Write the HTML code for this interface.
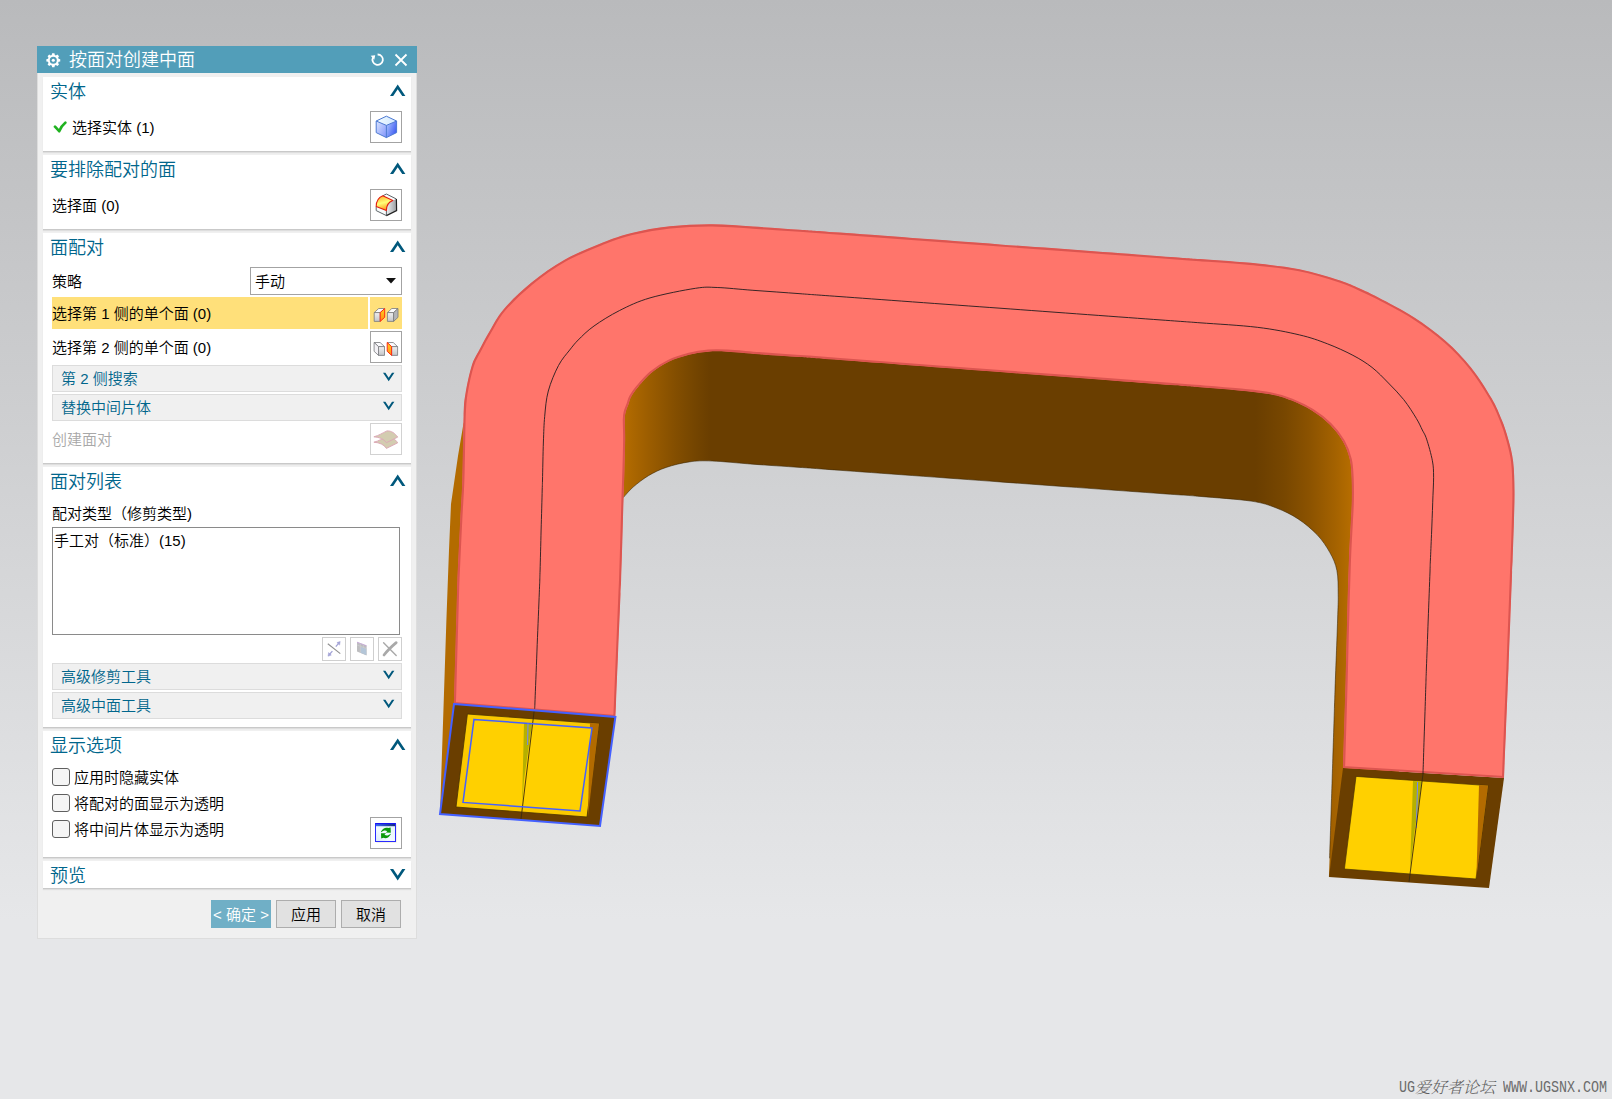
<!DOCTYPE html>
<html lang="zh-CN">
<head>
<meta charset="utf-8">
<title>按面对创建中面</title>
<style>
*{box-sizing:border-box;margin:0;padding:0}
html,body{width:1612px;height:1099px;overflow:hidden}
body{position:relative;font-family:"Liberation Sans","Noto Sans CJK SC",sans-serif;font-size:15px;font-weight:350;color:#000;
background:linear-gradient(to bottom,#b9babc 0px,#e6e7e9 920px,#e6e7e9 1099px);}
#model{position:absolute;left:0;top:0;width:1612px;height:1099px}
.panel{position:absolute;left:37px;top:46px;width:380px;height:893px;background:#f0f0f0;box-shadow:inset 0 0 0 1px #dddddd}
.abs{position:absolute}
.title{position:absolute;left:0;top:0;width:380px;height:27px;background:#529eb9;color:#fff;font-size:18px;line-height:27px}
.title span{position:absolute;left:32px;top:1px}
.sec{position:absolute;left:6px;width:368px;background:#fff;box-shadow:0 1px 0 #c9c9c9,0 2px 1px #dedede}
.sec h3{position:absolute;left:7px;top:1px;height:29px;line-height:29px;font-size:18px;font-weight:350;color:#00668c;white-space:nowrap}
.chev{position:absolute;left:347px;top:7px;width:16px;height:13px}
.lbl{position:absolute;left:9px;height:20px;line-height:20px;margin-top:1px;font-size:15px;white-space:nowrap}
.btn{position:absolute;left:327px;width:32px;height:32px;border:1px solid #a3a3a3;background:#fff}
.btn svg{position:absolute;left:-1px;top:-1px;width:32px;height:32px}
.grp{position:absolute;left:9px;width:350px;height:27px;background:#f0f0f0;border:1px solid #dcdcdc;color:#00668c;font-size:15px;line-height:25px;padding-left:8px;white-space:nowrap}
.grp svg{position:absolute;left:330px;top:6px;width:12px;height:10px}
.cb{position:absolute;left:9px;width:18px;height:18px;border:1px solid #5f5f5f;border-radius:3px;background:#f5f5f5}
.sbtn{position:absolute;width:24px;height:24px;border:1px solid #cfcfcf;background:#fff}
.sbtn svg{position:absolute;left:-1px;top:-1px;width:24px;height:24px}
.pb{position:absolute;top:854px;width:60px;height:28px;border:1px solid #adadad;background:#e1e1e1;text-align:center;line-height:28px;font-size:15px}
.wm{position:absolute;top:1077px;height:22px;line-height:22px;font-size:16px;color:#6b6b6b;white-space:nowrap;font-family:"Liberation Mono","Noto Serif CJK SC",monospace}
.wc{font-family:"Liberation Serif","Noto Serif CJK SC",serif;font-style:italic;font-weight:300;color:#5e5e5e}
.wl{display:inline-block;transform:scaleX(.833);transform-origin:0 50%}
</style>
</head>
<body>
<!--MODEL_START--><svg id="model" viewBox="0 0 1612 1099">
<defs>
<linearGradient id="gf" gradientUnits="userSpaceOnUse" x1="620" y1="0" x2="1352" y2="0">
<stop offset="0.005" stop-color="#b46c00"/><stop offset="0.042" stop-color="#9a5c00"/><stop offset="0.0765" stop-color="#834e00"/><stop offset="0.1025" stop-color="#744500"/><stop offset="0.123" stop-color="#6a3e00"/>
<stop offset="0.868" stop-color="#6a3e00"/><stop offset="0.908" stop-color="#784700"/><stop offset="0.943" stop-color="#8c5300"/><stop offset="0.977" stop-color="#a46200"/><stop offset="0.997" stop-color="#b46c00"/>
</linearGradient>
</defs>
<!-- left outer side strip -->
<path d="M468 412 L463.4 424 L458 456 L451 504 L449 550 L446.4 620 L440 814 L458 704 L472 700 L472 412 Z" fill="#b36b00"/>
<!-- inner face -->
<path d="M623.4 497.5 C625.0 495.8 628.9 490.7 633.1 487.1 C637.3 483.5 642.9 479.0 648.4 475.7 C653.9 472.4 659.4 469.7 666.2 467.4 C673.0 465.1 681.6 463.0 689.2 461.9 C696.9 460.8 701.5 460.6 712.1 461.0 C722.7 461.4 738.2 463.1 752.9 464.2 C767.5 465.3 785.5 466.4 800.0 467.4 C814.5 468.4 806.7 467.9 840.0 470.3 C873.3 472.7 946.7 478.0 1000.0 481.9 C1053.3 485.8 1126.7 491.1 1160.0 493.5 C1193.3 495.9 1184.8 495.1 1200.0 496.4 C1215.2 497.7 1238.3 499.2 1251.0 501.1 C1263.7 503.0 1268.6 505.0 1276.4 508.0 C1284.2 511.0 1291.3 514.4 1298.1 518.9 C1304.9 523.4 1311.9 529.2 1317.2 534.8 C1322.5 540.4 1326.6 546.7 1329.9 552.6 C1333.2 558.5 1335.5 563.4 1336.9 570.4 C1338.3 577.4 1338.1 586.3 1338.2 594.6 C1338.3 602.9 1338.1 604.1 1337.6 620.0 C1337.1 635.9 1335.5 675.2 1335.0 690.0 C1334.5 704.8 1334.9 693.1 1334.4 708.7 C1333.9 724.3 1332.8 758.6 1332.0 783.5 C1331.2 808.4 1330.1 842.7 1329.6 858.3 C1329.1 873.9 1329.1 873.9 1329.0 877.0 L1400 770 L1400 350 L700 300 L580 400 L580 498 Z" fill="url(#gf)"/>
<path d="M623.4 497.5 C625.0 495.8 628.9 490.7 633.1 487.1 C637.3 483.5 642.9 479.0 648.4 475.7 C653.9 472.4 659.4 469.7 666.2 467.4 C673.0 465.1 681.6 463.0 689.2 461.9 C696.9 460.8 701.5 460.6 712.1 461.0 C722.7 461.4 738.2 463.1 752.9 464.2 C767.5 465.3 785.5 466.4 800.0 467.4 C814.5 468.4 806.7 467.9 840.0 470.3 C873.3 472.7 946.7 478.0 1000.0 481.9 C1053.3 485.8 1126.7 491.1 1160.0 493.5 C1193.3 495.9 1184.8 495.1 1200.0 496.4 C1215.2 497.7 1238.3 499.2 1251.0 501.1 C1263.7 503.0 1268.6 505.0 1276.4 508.0 C1284.2 511.0 1291.3 514.4 1298.1 518.9 C1304.9 523.4 1311.9 529.2 1317.2 534.8 C1322.5 540.4 1326.6 546.7 1329.9 552.6 C1333.2 558.5 1335.5 563.4 1336.9 570.4 C1338.3 577.4 1338.1 586.3 1338.2 594.6 C1338.3 602.9 1338.1 604.1 1337.6 620.0 C1337.1 635.9 1335.5 675.2 1335.0 690.0 C1334.5 704.8 1334.9 693.1 1334.4 708.7 C1333.9 724.3 1332.8 758.6 1332.0 783.5 C1331.2 808.4 1330.0 845.8 1329.6 858.3" fill="none" stroke="#3a2400" stroke-width="0.8" opacity=".7"/>
<!-- left end face -->
<g>
<path d="M454 704 L615.4 717 L600 826 L440 814 Z" fill="#6a3e00"/>
<path d="M467.4 714 L599 723.6 L587 817 L456 807 Z" fill="#fbc900" stroke="#4a3200" stroke-width="0.8"/>
<path d="M590 723 L599 723.6 L588 816 Z" fill="#b36b00"/>
<path d="M474 719.4 L592 728 L580 811 L463 802.4 Z" fill="#ffd000"/>
<path d="M524 723 L532 723.6 L524 780 L522 806 Z" fill="#b5b000"/>
<path d="M534.4 709 L521 819" stroke="#3a2a10" stroke-width="0.9" fill="none"/>
<path d="M474 719.4 L592 728 L580 811 L463 802.4 Z" fill="none" stroke="#4460ff" stroke-width="1.5"/>
<path d="M528 723.4 L527.6 745" stroke="#6f86ff" stroke-width="1"/>
</g>
<!-- right end face -->
<g>
<path d="M1343 768 L1504 778 L1489 888 L1329 877 Z" fill="#6a3e00"/>
<path d="M1356 776.4 L1488 785.6 L1476 879 L1344.4 869 Z" fill="#ffd000" stroke="#4a3200" stroke-width="0.7"/>
<path d="M1479 785 L1488 785.6 L1476.4 878 Z" fill="#b36b00"/>
<path d="M1413 781 L1422 781.6 L1414 835 L1410 870 Z" fill="#b5b000"/>
<path d="M1417.6 782 L1416.4 828" stroke="#6f86ff" stroke-width="1"/>
<path d="M1423 774 L1409 882" stroke="#3a2a10" stroke-width="0.9" fill="none"/>
</g>
<!-- top salmon face -->
<clipPath id="cs"><path d="M453.8 704.0 C453.9 701.9 453.9 701.9 454.2 691.6 C454.5 681.3 455.1 658.5 455.6 642.0 C456.1 625.5 456.7 602.7 457.0 592.4 C457.3 582.1 456.9 592.1 457.4 580.0 C457.9 567.9 459.4 536.7 460.2 520.0 C461.0 503.3 461.7 497.3 462.3 480.0 C462.9 462.7 463.1 430.8 463.6 416.4 C464.1 402.0 464.1 402.0 465.5 393.5 C466.9 385.0 469.5 372.8 471.8 365.5 C474.1 358.2 476.3 355.8 479.3 350.0 C482.3 344.2 486.0 337.3 490.0 330.5 C494.0 323.7 496.6 317.4 503.5 309.4 C510.4 301.4 521.3 290.9 531.5 282.6 C541.7 274.3 552.7 266.4 564.6 259.7 C576.5 253.0 591.7 247.0 602.9 242.5 C614.1 238.0 620.6 235.6 631.8 232.9 C643.0 230.2 656.6 227.7 670.0 226.3 C683.4 224.9 698.3 224.2 712.1 224.3 C725.9 224.4 738.2 225.7 752.9 226.6 C767.5 227.5 785.5 228.7 800.0 229.7 C814.5 230.7 806.7 230.2 840.0 232.6 C873.3 235.1 946.7 240.5 1000.0 244.4 C1053.3 248.3 1126.7 253.7 1160.0 256.2 C1193.3 258.6 1183.8 257.9 1200.0 259.1 C1216.2 260.3 1240.7 261.9 1257.3 263.6 C1273.9 265.3 1285.6 266.5 1299.4 269.3 C1313.2 272.1 1330.1 277.3 1340.1 280.5 C1350.0 283.7 1352.7 285.5 1359.1 288.3 C1365.5 291.1 1369.2 292.7 1378.3 297.5 C1387.4 302.3 1402.7 309.9 1413.9 317.2 C1425.1 324.4 1436.2 332.6 1445.7 341.0 C1455.2 349.4 1463.6 358.1 1471.2 367.7 C1478.8 377.2 1486.5 389.6 1491.6 398.3 C1496.7 407.0 1499.0 413.2 1501.8 420.0 C1504.6 426.8 1506.3 432.1 1508.2 439.1 C1510.1 446.1 1512.2 453.3 1513.2 462.0 C1514.2 470.7 1514.4 481.3 1514.5 491.3 C1514.6 501.3 1514.2 510.4 1513.9 521.9 C1513.6 533.4 1512.9 551.6 1512.6 560.0 C1512.3 568.4 1512.5 562.0 1512.1 572.0 C1511.8 582.0 1510.9 604.0 1510.3 620.0 C1509.7 636.0 1508.8 658.0 1508.5 668.0 C1508.1 678.0 1508.1 676.4 1508.0 680.0 C1507.9 683.6 1507.9 681.6 1507.6 689.8 C1507.3 698.0 1506.5 715.9 1506.0 729.0 C1505.5 742.1 1504.7 760.0 1504.4 768.2 C1504.1 776.4 1504.1 776.4 1504.0 778.0 L1343.0 768.0 C1343.4 753.3 1344.9 704.7 1345.6 680.0 C1346.3 655.3 1346.5 640.0 1347.1 620.0 C1347.6 600.0 1348.3 576.3 1348.9 560.0 C1349.5 543.7 1350.3 532.0 1350.8 522.0 C1351.3 512.0 1351.7 507.3 1351.8 500.0 C1351.9 492.7 1351.9 485.1 1351.6 478.3 C1351.2 471.5 1351.2 465.4 1349.7 459.2 C1348.2 453.0 1346.0 447.0 1342.7 441.3 C1339.4 435.6 1335.0 429.9 1329.9 424.8 C1324.8 419.7 1318.5 414.8 1312.1 410.8 C1305.7 406.8 1298.7 403.4 1291.7 400.6 C1284.7 397.8 1279.0 395.9 1270.1 394.2 C1261.2 392.5 1249.9 391.6 1238.2 390.4 C1226.5 389.2 1213.0 388.2 1200.0 387.2 C1187.0 386.2 1193.3 386.7 1160.0 384.2 C1126.7 381.7 1053.3 376.1 1000.0 372.1 C946.7 368.1 873.3 362.5 840.0 360.0 C806.7 357.5 813.5 358.0 800.0 357.0 C786.5 356.0 771.3 355.1 759.2 354.2 C747.1 353.3 735.9 352.1 727.4 351.7 C718.9 351.3 714.7 351.2 708.3 351.7 C701.9 352.2 695.8 353.1 689.2 354.8 C682.6 356.5 675.2 358.7 668.8 361.8 C662.4 364.9 656.3 368.8 651.0 373.3 C645.7 377.8 640.2 384.6 636.9 388.6 C633.6 392.6 632.4 394.8 631.0 397.3 C629.6 399.9 629.5 401.6 628.7 403.9 C627.9 406.2 626.6 408.8 626.0 411.3 C625.4 413.9 625.0 414.4 624.9 419.2 C624.8 424.0 625.3 431.5 625.2 440.0 C625.1 448.5 624.8 460.4 624.5 470.0 C624.2 479.6 624.0 485.3 623.6 497.3 C623.2 509.3 622.7 528.2 622.3 542.0 C621.9 555.8 621.4 571.4 621.1 580.0 C620.8 588.6 621.0 582.3 620.5 593.7 C620.1 605.1 619.0 630.2 618.2 648.5 C617.5 666.8 616.4 691.9 616.0 703.3 C615.5 714.7 615.5 714.7 615.4 717.0 Z"/></clipPath>
<path d="M453.8 704.0 C453.9 701.9 453.9 701.9 454.2 691.6 C454.5 681.3 455.1 658.5 455.6 642.0 C456.1 625.5 456.7 602.7 457.0 592.4 C457.3 582.1 456.9 592.1 457.4 580.0 C457.9 567.9 459.4 536.7 460.2 520.0 C461.0 503.3 461.7 497.3 462.3 480.0 C462.9 462.7 463.1 430.8 463.6 416.4 C464.1 402.0 464.1 402.0 465.5 393.5 C466.9 385.0 469.5 372.8 471.8 365.5 C474.1 358.2 476.3 355.8 479.3 350.0 C482.3 344.2 486.0 337.3 490.0 330.5 C494.0 323.7 496.6 317.4 503.5 309.4 C510.4 301.4 521.3 290.9 531.5 282.6 C541.7 274.3 552.7 266.4 564.6 259.7 C576.5 253.0 591.7 247.0 602.9 242.5 C614.1 238.0 620.6 235.6 631.8 232.9 C643.0 230.2 656.6 227.7 670.0 226.3 C683.4 224.9 698.3 224.2 712.1 224.3 C725.9 224.4 738.2 225.7 752.9 226.6 C767.5 227.5 785.5 228.7 800.0 229.7 C814.5 230.7 806.7 230.2 840.0 232.6 C873.3 235.1 946.7 240.5 1000.0 244.4 C1053.3 248.3 1126.7 253.7 1160.0 256.2 C1193.3 258.6 1183.8 257.9 1200.0 259.1 C1216.2 260.3 1240.7 261.9 1257.3 263.6 C1273.9 265.3 1285.6 266.5 1299.4 269.3 C1313.2 272.1 1330.1 277.3 1340.1 280.5 C1350.0 283.7 1352.7 285.5 1359.1 288.3 C1365.5 291.1 1369.2 292.7 1378.3 297.5 C1387.4 302.3 1402.7 309.9 1413.9 317.2 C1425.1 324.4 1436.2 332.6 1445.7 341.0 C1455.2 349.4 1463.6 358.1 1471.2 367.7 C1478.8 377.2 1486.5 389.6 1491.6 398.3 C1496.7 407.0 1499.0 413.2 1501.8 420.0 C1504.6 426.8 1506.3 432.1 1508.2 439.1 C1510.1 446.1 1512.2 453.3 1513.2 462.0 C1514.2 470.7 1514.4 481.3 1514.5 491.3 C1514.6 501.3 1514.2 510.4 1513.9 521.9 C1513.6 533.4 1512.9 551.6 1512.6 560.0 C1512.3 568.4 1512.5 562.0 1512.1 572.0 C1511.8 582.0 1510.9 604.0 1510.3 620.0 C1509.7 636.0 1508.8 658.0 1508.5 668.0 C1508.1 678.0 1508.1 676.4 1508.0 680.0 C1507.9 683.6 1507.9 681.6 1507.6 689.8 C1507.3 698.0 1506.5 715.9 1506.0 729.0 C1505.5 742.1 1504.7 760.0 1504.4 768.2 C1504.1 776.4 1504.1 776.4 1504.0 778.0 L1343.0 768.0 C1343.4 753.3 1344.9 704.7 1345.6 680.0 C1346.3 655.3 1346.5 640.0 1347.1 620.0 C1347.6 600.0 1348.3 576.3 1348.9 560.0 C1349.5 543.7 1350.3 532.0 1350.8 522.0 C1351.3 512.0 1351.7 507.3 1351.8 500.0 C1351.9 492.7 1351.9 485.1 1351.6 478.3 C1351.2 471.5 1351.2 465.4 1349.7 459.2 C1348.2 453.0 1346.0 447.0 1342.7 441.3 C1339.4 435.6 1335.0 429.9 1329.9 424.8 C1324.8 419.7 1318.5 414.8 1312.1 410.8 C1305.7 406.8 1298.7 403.4 1291.7 400.6 C1284.7 397.8 1279.0 395.9 1270.1 394.2 C1261.2 392.5 1249.9 391.6 1238.2 390.4 C1226.5 389.2 1213.0 388.2 1200.0 387.2 C1187.0 386.2 1193.3 386.7 1160.0 384.2 C1126.7 381.7 1053.3 376.1 1000.0 372.1 C946.7 368.1 873.3 362.5 840.0 360.0 C806.7 357.5 813.5 358.0 800.0 357.0 C786.5 356.0 771.3 355.1 759.2 354.2 C747.1 353.3 735.9 352.1 727.4 351.7 C718.9 351.3 714.7 351.2 708.3 351.7 C701.9 352.2 695.8 353.1 689.2 354.8 C682.6 356.5 675.2 358.7 668.8 361.8 C662.4 364.9 656.3 368.8 651.0 373.3 C645.7 377.8 640.2 384.6 636.9 388.6 C633.6 392.6 632.4 394.8 631.0 397.3 C629.6 399.9 629.5 401.6 628.7 403.9 C627.9 406.2 626.6 408.8 626.0 411.3 C625.4 413.9 625.0 414.4 624.9 419.2 C624.8 424.0 625.3 431.5 625.2 440.0 C625.1 448.5 624.8 460.4 624.5 470.0 C624.2 479.6 624.0 485.3 623.6 497.3 C623.2 509.3 622.7 528.2 622.3 542.0 C621.9 555.8 621.4 571.4 621.1 580.0 C620.8 588.6 621.0 582.3 620.5 593.7 C620.1 605.1 619.0 630.2 618.2 648.5 C617.5 666.8 616.4 691.9 616.0 703.3 C615.5 714.7 615.5 714.7 615.4 717.0 Z" fill="#ff756b" stroke="#dc5550" stroke-width="4.2" stroke-linejoin="round" clip-path="url(#cs)"/>
<path d="M534.7 708.7 C534.8 706.6 534.8 706.6 535.2 695.8 C535.6 685.1 536.6 661.5 537.2 644.4 C537.9 627.2 538.9 603.6 539.3 592.9 C539.7 582.1 539.7 583.8 539.8 580.0 C539.9 576.2 539.8 578.3 540.1 570.0 C540.3 561.7 540.8 543.3 541.1 530.0 C541.5 516.7 542.0 498.3 542.2 490.0 C542.5 481.7 542.3 488.0 542.5 480.0 C542.7 472.0 543.0 452.6 543.4 442.0 C543.8 431.4 543.9 424.9 544.7 416.4 C545.5 407.9 546.0 399.5 548.3 391.0 C550.6 382.5 554.9 372.3 558.5 365.5 C562.1 358.7 566.4 354.2 569.7 350.0 C573.0 345.8 574.2 344.0 578.2 340.0 C582.2 336.0 587.1 330.9 594.0 326.0 C600.9 321.1 610.1 315.3 619.4 310.6 C628.7 305.9 637.3 301.6 650.0 297.9 C662.7 294.2 684.3 290.0 695.5 288.3 C706.7 286.6 707.6 287.2 717.2 287.5 C726.8 287.8 739.1 289.3 752.9 290.3 C766.7 291.3 785.5 292.6 800.0 293.7 C814.5 294.8 806.7 294.2 840.0 296.6 C873.3 299.0 946.7 304.4 1000.0 308.2 C1053.3 312.1 1126.7 317.5 1160.0 319.9 C1193.3 322.3 1183.8 321.6 1200.0 322.8 C1216.2 324.0 1240.7 325.3 1257.3 327.3 C1273.9 329.3 1287.7 332.1 1299.4 334.9 C1311.1 337.6 1318.5 340.4 1327.4 343.8 C1336.3 347.2 1345.5 351.4 1352.9 355.3 C1360.3 359.2 1366.1 362.8 1372.0 367.4 C1377.9 372.0 1383.1 377.6 1388.4 383.0 C1393.7 388.4 1399.0 393.7 1403.7 399.6 C1408.4 405.5 1413.3 413.4 1416.4 418.5 C1419.5 423.6 1420.6 426.6 1422.3 430.0 C1424.0 433.4 1424.9 434.0 1426.6 439.1 C1428.3 444.2 1431.2 454.4 1432.4 460.8 C1433.6 467.2 1433.5 470.3 1433.6 477.3 C1433.6 484.3 1433.0 493.2 1432.7 502.8 C1432.4 512.4 1431.9 525.1 1431.5 534.6 C1431.1 544.1 1430.7 553.8 1430.4 560.0 C1430.1 566.2 1430.3 562.0 1430.0 572.0 C1429.6 582.0 1428.8 604.0 1428.2 620.0 C1427.6 636.0 1426.8 658.0 1426.4 668.0 C1426.1 678.0 1426.1 676.4 1426.0 680.0 C1425.9 683.6 1426.0 681.6 1425.7 689.4 C1425.5 697.2 1424.9 714.5 1424.5 727.0 C1424.1 739.5 1423.5 756.8 1423.3 764.6 C1423.0 772.4 1423.0 772.4 1423.0 774.0" fill="none" stroke="#231c1e" stroke-width="0.9"/>
<!-- left end blue outline -->
<path d="M454 704 L615.4 717 L600 826 L440 814 Z" fill="none" stroke="#4460ff" stroke-width="2"/>
</svg><!--MODEL_END-->
<div class="panel">
  <div class="title">
    <svg class="abs" style="left:7.700px;top:5.600px" width="16.600" height="16.600" viewBox="0 0 16 16"><g fill="#fff"><path d="M8 1.2l1.1.1.4 1.6 1 .45 1.45-.85 1.55 1.55-.85 1.45.45 1 1.6.4v2.2l-1.6.4-.45 1 .85 1.45-1.55 1.55-1.45-.85-1 .45-.4 1.6H6.900l-.4-1.6-1-.45-1.450.85-1.550-1.550.85-1.450-.45-1-1.600-.4V6.900l1.600-.4.45-1-.85-1.450L4.050 2.500l1.450.85 1-.45.4-1.600z M8 4.600a3.400 3.400 0 100 6.800 3.400 3.400 0 000-6.800z" fill-rule="evenodd"/><circle cx="8" cy="8" r="1.500"/></g></svg>
    <span>按面对创建中面</span>
    <svg class="abs" style="left:332px;top:6px" width="16" height="16" viewBox="0 0 16 16"><path d="M4 5.400A5.200 5.200 0 1 0 8.600 2.500" fill="none" stroke="#fff" stroke-width="1.800"/><path d="M1.700 3.700L6.200 3.200 5.300 7.700z" fill="#fff"/></svg>
    <svg class="abs" style="left:357px;top:7px" width="14" height="14" viewBox="0 0 14 14"><path d="M1.500 1.500l11 11M12.500 1.500l-11 11" stroke="#fff" stroke-width="1.800" fill="none"/></svg>
  </div>

  <!-- 实体 -->
  <div class="sec" style="top:31px;height:74px">
    <h3>实体</h3>
    <svg class="chev" viewBox="0 0 16 13"><path d="M7.700 .6L15.400 12H12.200L7.700 5.300 3.200 12H0z" fill="#00587c"/></svg>
    <svg class="abs" style="left:10px;top:43px" width="14" height="14" viewBox="0 0 14 14"><path d="M2 6.700L6.200 11.200C7.600 7.800 9.600 4.800 12.300 2.700" fill="none" stroke="#20b220" stroke-width="2.700" stroke-linejoin="round" stroke-linecap="round"/></svg>
    <div class="lbl" style="left:29px;top:40px">选择实体 (1)</div>
    <div class="btn" style="top:34px"><!--ICON1S--><svg viewBox="0 0 32 32"><defs><linearGradient id="c1l" x1="0" y1="0" x2="1" y2="1"><stop offset="0" stop-color="#dbe6ff"/><stop offset="1" stop-color="#7f93fb"/></linearGradient><linearGradient id="c1r" x1="0" y1="0" x2="1" y2="0.6"><stop offset="0" stop-color="#b4ccff"/><stop offset="1" stop-color="#3f5cf2"/></linearGradient><linearGradient id="c1t" x1="0" y1="0" x2="1" y2="0"><stop offset="0" stop-color="#f2fcff"/><stop offset="1" stop-color="#d2e8ff"/></linearGradient></defs>
<path d="M16.4 5.200L26.6 10 16.4 14.4 6.2 10z" fill="url(#c1t)"/><path d="M6.2 10L16.4 14.400V26.600L6.2 21.600z" fill="url(#c1l)"/><path d="M26.6 10L16.4 14.400V26.600L26.6 21.600z" fill="url(#c1r)"/>
<path d="M16.4 5.200L26.6 10V21.600L16.4 26.6 6.2 21.600V10zM6.2 10L16.4 14.4 26.6 10M16.4 14.400V26.6" fill="none" stroke="#4b78d2" stroke-width="1" stroke-linejoin="round"/></svg><!--ICON1E--></div>
  </div>

  <!-- 要排除配对的面 -->
  <div class="sec" style="top:109px;height:74px">
    <h3>要排除配对的面</h3>
    <svg class="chev" viewBox="0 0 16 13"><path d="M7.700 .6L15.400 12H12.200L7.700 5.300 3.200 12H0z" fill="#00587c"/></svg>
    <div class="lbl" style="top:40px">选择面 (0)</div>
    <div class="btn" style="top:34px"><!--ICON2S--><svg viewBox="0 0 32 32"><defs><linearGradient id="c2o" x1="0" y1="0" x2="0.3" y2="1"><stop offset="0" stop-color="#ffa51e"/><stop offset="0.55" stop-color="#ffff78"/><stop offset="1" stop-color="#ff9a1a"/></linearGradient><linearGradient id="c2g" x1="0" y1="0" x2="1" y2="0"><stop offset="0" stop-color="#eef1f3"/><stop offset="1" stop-color="#9a9da0"/></linearGradient></defs>
<path d="M12.8 6.800L16.4 5 26.4 10 22.8 11.600z" fill="#fbfdfd"/>
<path d="M22.8 11.600L26.4 10 26.6 21.6 16.4 26.600V21.600C16.4 16.5 18.8 13 22.8 11.600z" fill="url(#c2g)"/>
<path d="M6.2 17.600L16.4 21.600V26.600L6.2 21.600z" fill="#f7fbfb"/>
<path d="M6.2 17.600C6.2 12 8.5 8.5 12.8 6.800L22.8 11.600C18.8 13 16.4 16.5 16.4 21.600z" fill="url(#c2o)"/>
<path d="M12.8 6.800L16.4 5 26.4 10M6.2 17.600V21.600L16.4 26.600V21.6" fill="none" stroke="#5d6468" stroke-width="1"/>
<path d="M26.4 10L26.6 21.6 16.4 26.6" fill="none" stroke="#222" stroke-width="1.2"/>
<path d="M6.2 17.600C6.2 12 8.5 8.5 12.8 6.800L22.8 11.600C18.8 13 16.4 16.5 16.4 21.600z" fill="none" stroke="#e21d12" stroke-width="1.1" stroke-linejoin="round"/></svg><!--ICON2E--></div>
  </div>

  <!-- 面配对 -->
  <div class="sec" style="top:187px;height:230px">
    <h3>面配对</h3>
    <svg class="chev" viewBox="0 0 16 13"><path d="M7.700 .6L15.400 12H12.200L7.700 5.300 3.200 12H0z" fill="#00587c"/></svg>
    <div class="lbl" style="top:38px">策略</div>
    <div class="abs" style="left:207px;top:34px;width:152px;height:28px;border:1px solid #a3a3a3;background:#fff;line-height:28px;padding-left:4px">手动
      <svg class="abs" style="left:135px;top:10px" width="10" height="6" viewBox="0 0 10 6"><path d="M0 0h10L5 5.500z" fill="#111"/></svg>
    </div>
    <div class="abs" style="left:9px;top:64px;width:316px;height:32px;background:#ffe07a;line-height:34px;white-space:nowrap">选择第 1 侧的单个面 (0)</div>
    <div class="abs" style="left:327px;top:64px;width:32px;height:32px;background:#ffe07a"><!--ICON3S--><svg class="abs" style="left:0;top:0" width="32" height="32" viewBox="0 0 32 32"><defs><linearGradient id="cg" x1="0" y1="0" x2="0" y2="1"><stop offset="0" stop-color="#f0f0f2"/><stop offset="1" stop-color="#c4c5c8"/></linearGradient><linearGradient id="co" x1="0" y1="0" x2="0" y2="1"><stop offset="0" stop-color="#ffd21e"/><stop offset="1" stop-color="#ff8a14"/></linearGradient></defs><path d="M4.2 15.6L8.7 11.5H14.7L10.2 15.6z" fill="#fafafc" stroke="#77797c" stroke-width=".8" stroke-linejoin="round"/><path d="M4.2 15.6H10.2V24.4H4.2z" fill="url(#cg)" stroke="#77797c" stroke-width=".8" stroke-linejoin="round"/><path d="M10.2 15.6L14.7 11.5V20.299999999999997L10.2 24.4z" fill="url(#co)" stroke="#ff2a14" stroke-width="1" stroke-linejoin="round"/><path d="M17.4 15.6L21.799999999999997 11.5H28.0L23.6 15.6z" fill="#fafafc" stroke="#77797c" stroke-width=".8" stroke-linejoin="round"/><path d="M17.4 15.6H23.6V24.4H17.4z" fill="url(#cg)" stroke="#77797c" stroke-width=".8" stroke-linejoin="round"/><path d="M23.6 15.6L28.0 11.5V20.299999999999997L23.6 24.4z" fill="#b4b5b8" stroke="#77797c" stroke-width=".8" stroke-linejoin="round"/></svg><!--ICON3E--></div>
    <div class="lbl" style="top:104px">选择第 2 侧的单个面 (0)</div>
    <div class="btn" style="top:98px"><!--ICON4S--><svg viewBox="0 0 32 32"><path d="M8.5 15.6L4.1 11.5H10.1L14.5 15.6z" fill="#fafafc" stroke="#77797c" stroke-width=".8" stroke-linejoin="round"/><path d="M8.5 15.6H14.5V24.4H8.5z" fill="url(#cg)" stroke="#77797c" stroke-width=".8" stroke-linejoin="round"/><path d="M8.5 15.6L4.1 11.5V20.299999999999997L8.5 24.4z" fill="#f4f2f6" stroke="#77797c" stroke-width=".8" stroke-linejoin="round"/><path d="M21.6 15.6L17.200000000000003 11.5H23.200000000000003L27.6 15.6z" fill="#fafafc" stroke="#77797c" stroke-width=".8" stroke-linejoin="round"/><path d="M21.6 15.6H27.6V24.4H21.6z" fill="url(#cg)" stroke="#77797c" stroke-width=".8" stroke-linejoin="round"/><path d="M21.6 15.6L17.200000000000003 11.5V20.299999999999997L21.6 24.4z" fill="url(#co)" stroke="#ff2a14" stroke-width="1" stroke-linejoin="round"/></svg><!--ICON4E--></div>
    <div class="grp" style="top:132px">第 2 侧搜索<svg viewBox="0 0 12 10"><path d="M5.700 9.300L11.400 .8H9L5.700 5.800 2.400 .8H0z" fill="#00587c"/></svg></div>
    <div class="grp" style="top:161px">替换中间片体<svg viewBox="0 0 12 10"><path d="M5.700 9.300L11.400 .8H9L5.700 5.800 2.400 .8H0z" fill="#00587c"/></svg></div>
    <div class="lbl" style="top:196px;color:#a8a8a8">创建面对</div>
    <div class="btn" style="top:190px;border-color:#d2d2d2"><!--ICON5S--><svg viewBox="0 0 32 32"><g fill="#d3ccb0" stroke="#dcaab6" stroke-width="1" stroke-linejoin="round"><path d="M3.9 19.200C9 18 12.5 15.5 17 13.4 21.5 13.2 25 16 27.7 19.800L16.4 25.400C14 21.5 9.5 19.6 3.9 19.200z"/><path d="M3.9 13.800C9 12.5 12.5 10 17 7.9 21.5 7.7 25 10.3 27.7 14.100L16.4 19.700C14 16 9.5 14.2 3.9 13.800z"/></g></svg><!--ICON5E--></div>
  </div>

  <!-- 面对列表 -->
  <div class="sec" style="top:421px;height:260px">
    <h3>面对列表</h3>
    <svg class="chev" viewBox="0 0 16 13"><path d="M7.700 .6L15.400 12H12.200L7.700 5.300 3.200 12H0z" fill="#00587c"/></svg>
    <div class="lbl" style="top:36px">配对类型（修剪类型)</div>
    <div class="abs" style="left:9px;top:60px;width:348px;height:108px;border:1px solid #8a8a8a;background:#fff">
      <div class="lbl" style="left:1px;top:2px">手工对（标准）(15)</div>
    </div>
    <div class="sbtn" style="left:279px;top:170px"><!--ICON6S--><svg viewBox="0 0 24 24"><path d="M5.8 6.700L18.3 16.6" stroke="#8f8f8f" stroke-width="1.1"/><g fill="#a3a3d6" stroke="#a3a3d6" stroke-width="1.3"><path d="M13.8 9.600L16.6 6.4"/><path d="M18.2 4.500L17.6 8.1 14.9 5.600z" stroke-width=".5"/><path d="M10.4 14.100L7.6 17.3"/><path d="M6 19.200L6.6 15.6 9.3 18.100z" stroke-width=".5"/></g></svg><!--ICON6E--></div>
    <div class="sbtn" style="left:307px;top:170px"><!--ICON7S--><svg viewBox="0 0 24 24"><path d="M7 5.200L16.6 8.800V18.600L7 14.500z" fill="#bdbdbf"/><path d="M10.6 9.700L16.3 11.800V18.100L10.6 15.800z" fill="#b4c6d8"/><path d="M7 5.200L16.6 8.8" stroke="#c6a9d6" stroke-width="1"/><path d="M7 8L16.6 11.600M10.3 6.500V15.800M13.4 7.700V11" stroke="#cfcfd1" stroke-width=".7" fill="none"/></svg><!--ICON7E--></div>
    <div class="sbtn" style="left:335px;top:170px"><!--ICON8S--><svg viewBox="0 0 24 24"><path d="M5.6 5.800L18.2 18.4" stroke="#a9a9a9" stroke-width="1.4" stroke-linecap="round"/><path d="M18.2 5.600C13 10 9 14 6 18" stroke="#a9a9a9" stroke-width="2.7" stroke-linecap="round" fill="none"/></svg><!--ICON8E--></div>
    <div class="grp" style="top:196px">高级修剪工具<svg viewBox="0 0 12 10"><path d="M5.700 9.300L11.400 .8H9L5.700 5.800 2.400 .8H0z" fill="#00587c"/></svg></div>
    <div class="grp" style="top:225px">高级中面工具<svg viewBox="0 0 12 10"><path d="M5.700 9.300L11.400 .8H9L5.700 5.800 2.400 .8H0z" fill="#00587c"/></svg></div>
  </div>

  <!-- 显示选项 -->
  <div class="sec" style="top:685px;height:126px">
    <h3>显示选项</h3>
    <svg class="chev" viewBox="0 0 16 13"><path d="M7.700 .6L15.400 12H12.200L7.700 5.300 3.200 12H0z" fill="#00587c"/></svg>
    <div class="cb" style="top:37px"></div><div class="lbl" style="left:31px;top:36px">应用时隐藏实体</div>
    <div class="cb" style="top:63px"></div><div class="lbl" style="left:31px;top:62px">将配对的面显示为透明</div>
    <div class="cb" style="top:89px"></div><div class="lbl" style="left:31px;top:88px">将中间片体显示为透明</div>
    <div class="btn" style="top:86px"><!--ICON9S--><svg viewBox="0 0 32 32"><defs><linearGradient id="wt" x1="0" y1="0" x2="1" y2="0"><stop offset="0" stop-color="#3a6cf0"/><stop offset="1" stop-color="#172f78"/></linearGradient><linearGradient id="wb" x1="0" y1="1" x2="1" y2="0"><stop offset="0" stop-color="#d9e8fb"/><stop offset=".4" stop-color="#f2fbff"/><stop offset="1" stop-color="#e4f3fb"/></linearGradient></defs>
<rect x="6.3" y="7.3" width="20.2" height="18.2" fill="#d8d4b0" opacity=".6"/>
<rect x="5.5" y="6.5" width="20" height="18" fill="url(#wb)" stroke="#2a2aff" stroke-width="1"/><rect x="6" y="7" width="19" height="2.2" fill="url(#wt)"/><rect x="5.5" y="6.2" width="20" height="1" fill="#1010f0"/>
<g fill="#0a9a0a"><path d="M10.9 14.800C12.8 11.3 15.7 9.9 18.3 11.100L20.6 10.4 20.8 15.7 15.8 15.6 17.3 14.200C15.3 12.8 13.2 13.3 11.4 15.200z"/><path d="M20.9 17C19 20.6 16.1 22 13.5 20.800L11.2 21.5 11 16.2 16 16.3 14.5 17.700C16.5 19.1 18.6 18.6 20.4 16.700z"/></g></svg><!--ICON9E--></div>
  </div>

  <!-- 预览 -->
  <div class="sec" style="top:815px;height:27px">
    <h3>预览</h3>
    <svg class="chev" viewBox="0 0 16 13"><path d="M7.700 12.400L15.400 1H12.200L7.700 7.700 3.200 1H0z" fill="#00587c"/></svg>
  </div>

  <div class="pb" style="left:174px;background:#70afc6;border-color:#70afc6;color:#fff;white-space:nowrap">&lt; 确定 &gt;</div>
  <div class="pb" style="left:239px">应用</div>
  <div class="pb" style="left:304px">取消</div>
</div>

<div class="wm" style="left:1399px"><span class="wl">UG</span></div>
<div class="wm wc" style="left:1415px">爱好者论坛</div>
<div class="wm" style="left:1503px"><span class="wl">WWW.UGSNX.COM</span></div>
</body>
</html>
